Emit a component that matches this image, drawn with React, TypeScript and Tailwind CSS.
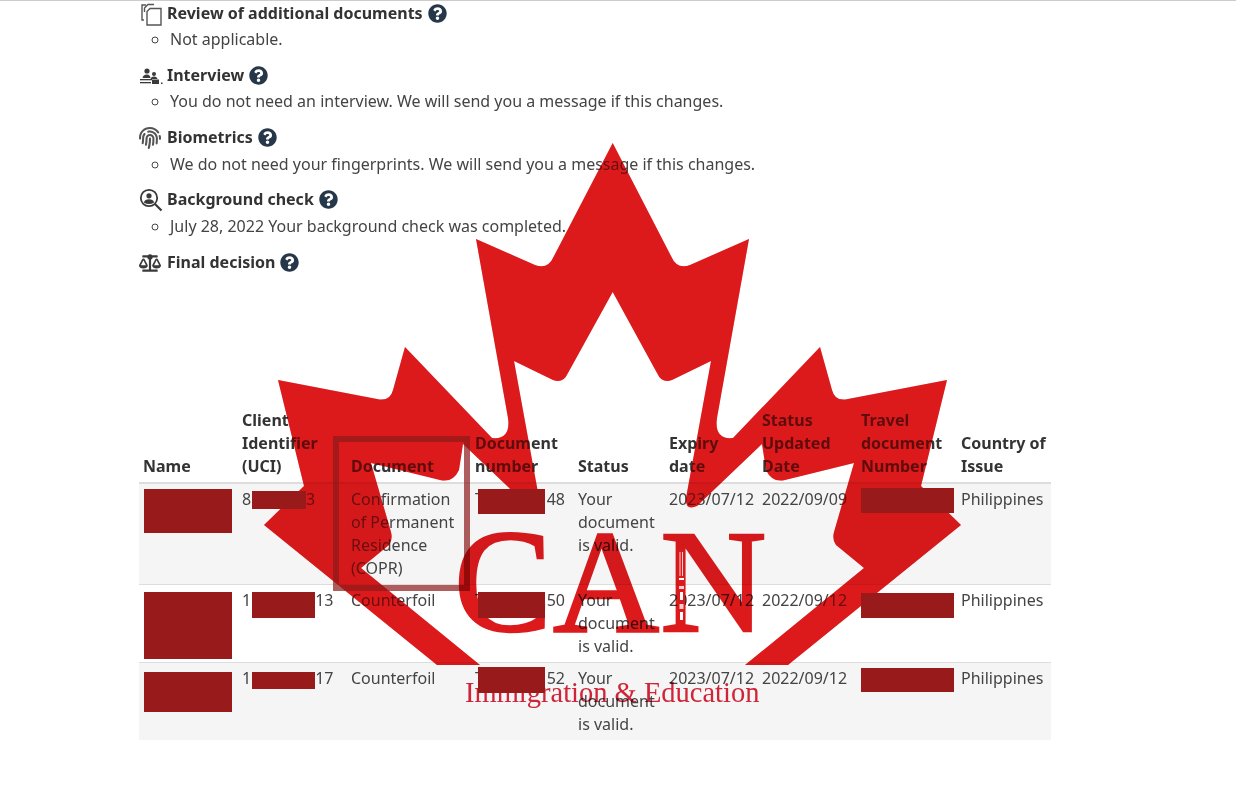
import React from "react";
import { FaQuestionCircle, FaFingerprint, FaBalanceScale } from "react-icons/fa";

const leafPath =
  "M612.7 143 L671 256 Q677 270 690 265 L749 239 L717 418 Q714 440 733 438 L820 347 L832 390 Q835 402 848 399 L947 380 L921 486 L961 525 L788 665 L745 665 L864 568 L836 545 Q832 540 834 532 L854 463 L785 480 Q772 483 766 470 L762 444 L697 506 Q685 511 686 498 L711 361 L672 380 Q662 384 657 373 L612.7 292 L568 373 Q563 384 553 380 L514 361 L539 498 Q540 511 528 506 L463 444 L459 470 Q453 483 440 480 L371 463 L391 532 Q393 540 389 545 L361 568 L480 665 L437 665 L264 525 L304 486 L278 380 L377 399 Q390 402 393 390 L405 347 L492 438 Q511 440 508 418 L476 239 L535 265 Q548 270 554 256 Z";

function Leaf({ className }: { className: string }) {
  return (
    <svg className={className} width="1236" height="786" viewBox="0 0 1236 786">
      <path d={leafPath} fill="#dc1a1c" />
    </svg>
  );
}

function CopyIcon() {
  return (
    <svg width="24" height="24" viewBox="0 0 24 24" fill="none" stroke="#555" strokeWidth="1.4">
      <path d="M7 3 H3 V18 H5" />
      <path d="M15 2.5 H9 L5.5 6 V10" />
      <path d="M11 6.5 H22 V23 H8 V9.5 Z" />
    </svg>
  );
}

function InterviewIcon() {
  return (
    <svg width="24" height="20" viewBox="0 0 24 20" fill="#3a3a3a">
      <circle cx="8" cy="5" r="2.6" />
      <circle cx="15" cy="8" r="2" />
      <path d="M3.5 12 Q4 8.5 8 8.5 Q11 8.5 11.5 12 Z" />
      <path d="M11.5 13 Q12 10.5 15 10.5 Q18 10.5 18.5 13 Z" />
      <rect x="1" y="13" width="12" height="1.3" />
      <rect x="13" y="13.5" width="7" height="4.5" />
      <rect x="1" y="16" width="11" height="1.3" />
      <rect x="22" y="16.5" width="1.5" height="1.5" />
    </svg>
  );
}

function CheckIcon() {
  return (
    <svg width="24" height="24" viewBox="0 0 24 24" fill="none" stroke="#3a3a3a" strokeWidth="1.8">
      <circle cx="10" cy="10" r="8.2" />
      <path d="M16 16 L22.5 22.5" strokeWidth="2.2" />
      <circle cx="10" cy="7.8" r="2.6" fill="#3a3a3a" stroke="none" />
      <path d="M4.8 14.5 Q6 11.2 10 11.2 Q14 11.2 15.2 14.5 Q10 17.5 4.8 14.5 Z" fill="#3a3a3a" stroke="none" />
    </svg>
  );
}

function Section({
  icon,
  title,
  items,
  className,
  drop,
}: {
  icon: React.ReactNode;
  title: string;
  items?: string[];
  className?: string;
  drop?: boolean;
}) {
  return (
    <section className={`mb-4 ${className ?? ""}`}>
      <h3 className="flex items-center h-[23px] font-bold text-[16px] text-[#333]">
        <span className="w-[28px] flex items-center">{icon}</span>
        <span>{title}</span>
        <FaQuestionCircle className="ml-[5px] text-[#26374a]" size={19} />
      </h3>
      {items && (
        <ul className={`list-[circle] pl-[31px] text-[#444] ${drop ? "mt-1 -mb-1" : "mt-[3px] -mb-[3px]"}`}>
          {items.map((t) => (
            <li key={t}>{t}</li>
          ))}
        </ul>
      )}
    </section>
  );
}

const rows = [
  {
    uci: "80000003",
    doc: "Confirmation of Permanent Residence (COPR)",
    num: "48",
    updated: "2022/09/09",
  },
  { uci: "1000000013", doc: "Counterfoil", num: "50", updated: "2022/09/12" },
  { uci: "1000000017", doc: "Counterfoil", num: "52", updated: "2022/09/12" },
];

const boxes = [
  "left-[144px] top-[489px] w-[88px] h-[44px]",
  "left-[144px] top-[592px] w-[88px] h-[67px]",
  "left-[144px] top-[672px] w-[88px] h-[40px]",
  "left-[252px] top-[491px] w-[54px] h-[18px]",
  "left-[252px] top-[592px] w-[63px] h-[26px]",
  "left-[252px] top-[672px] w-[63px] h-[17px]",
  "left-[478px] top-[489px] w-[67px] h-[25px]",
  "left-[478px] top-[592px] w-[67px] h-[26px]",
  "left-[478px] top-[667px] w-[67px] h-[26px]",
  "left-[861px] top-[488px] w-[93px] h-[25px]",
  "left-[861px] top-[593px] w-[93px] h-[25px]",
  "left-[861px] top-[668px] w-[93px] h-[24px]",
];

export default function App() {
  return (
    <div className="relative w-[1236px] h-[786px] overflow-hidden bg-white font-['Noto_Sans',sans-serif] text-[16px] leading-[23px] text-[#333]">
      <div className="h-px bg-[#ccc]" />
      <div className="pt-px pl-[139px]">
        <Section
          icon={<CopyIcon />}
          title="Review of additional documents"
          items={["Not applicable."]}
        />
        <Section
          icon={<InterviewIcon />}
          title="Interview"
          items={["You do not need an interview. We will send you a message if this changes."]}
        />
        <Section
          icon={<FaFingerprint size={22} className="text-[#555]" />}
          title="Biometrics"
          items={["We do not need your fingerprints. We will send you a message if this changes."]}
          drop
        />
        <Section
          icon={<CheckIcon />}
          title="Background check"
          items={["July 28, 2022 Your background check was completed."]}
          drop
        />
        <Section
          icon={<FaBalanceScale size={22} className="text-[#3a3a3a]" />}
          title="Final decision"
          className="mt-[17px]"
        />

        <table className="mt-[131px] table-fixed w-[912px] border-collapse">
          <thead>
            <tr className="border-b-2 border-[#ddd] text-left align-bottom">
              <th className="w-[99px] p-1 font-bold">Name</th>
              <th className="w-[109px] p-1 font-bold">Client Identifier (UCI)</th>
              <th className="w-[124px] p-1 font-bold">Document</th>
              <th className="w-[103px] p-1 font-bold">Document number</th>
              <th className="w-[91px] p-1 font-bold">Status</th>
              <th className="w-[93px] p-1 font-bold">Expiry date</th>
              <th className="w-[99px] p-1 font-bold">Status Updated Date</th>
              <th className="w-[100px] p-1 font-bold">Travel document Number</th>
              <th className="w-[94px] p-1 font-bold">Country of Issue</th>
            </tr>
          </thead>
          <tbody className="text-[#444]">
            {rows.map((r, i) => (
              <tr key={r.uci} className={`border-b border-[#ddd] last:border-b-0 align-top ${i % 2 === 0 ? "bg-[#f5f5f5]" : "bg-white"}`}>
                <td className="p-1" />
                <td className="p-1">{r.uci}</td>
                <td className="p-1">{r.doc}</td>
                <td className="p-1">
                  <div className="flex justify-between w-[90px]">
                    <span>T</span>
                    <span>{r.num}</span>
                  </div>
                </td>
                <td className="p-1">Your document is valid.</td>
                <td className="p-1">2023/07/12</td>
                <td className="p-1">{r.updated}</td>
                <td className="p-1" />
                <td className="p-1">Philippines</td>
              </tr>
            ))}
          </tbody>
        </table>
      </div>

      {/* watermark: multiply keeps the text readable, second layer lifts it back to red */}
      <Leaf className="absolute left-0 top-0 mix-blend-multiply pointer-events-none" />
      <Leaf className="absolute left-0 top-0 opacity-30 pointer-events-none" />
      <div className="absolute left-[333px] top-[436px] w-[137px] h-[155px] border-[6px] border-[#8b1a1a] opacity-70" />
      <svg className="absolute left-0 top-0 mix-blend-multiply pointer-events-none" width="1236" height="786" viewBox="0 0 1236 786">
        <text x="454" y="631" fontSize="147" fill="#dc1a1c" stroke="#dc1a1c" strokeWidth="2.4" letterSpacing="1" fontFamily="'Liberation Serif', serif">
          CAN
        </text>
        <text x="465" y="702" fontSize="28.5" fill="#d9263a" fontFamily="'Liberation Serif', serif">
          Immigration &amp; Education
        </text>
      </svg>
      {/* tower on the N stem */}
      <svg className="absolute left-[676px] top-[548px]" width="12" height="80" viewBox="0 0 12 80">
        <rect x="2" y="2" width="7" height="78" fill="#dc1a1c" />
        <rect x="3.5" y="4" width="1" height="24" fill="#f6d0d0" />
        <rect x="6" y="4" width="1" height="24" fill="#f6d0d0" />
        <rect x="3" y="30" width="5" height="2" fill="#fff" />
        <rect x="3" y="38" width="5" height="3" fill="#f6d0d0" />
        <rect x="4" y="44" width="3" height="8" fill="#fff" />
        <rect x="3.5" y="56" width="4" height="5" fill="#f6d0d0" />
        <rect x="4" y="64" width="3" height="8" fill="#fff" />
      </svg>
      {boxes.map((b) => (
        <div key={b} className={`absolute bg-[#981a1a] ${b}`} />
      ))}
    </div>
  );
}
